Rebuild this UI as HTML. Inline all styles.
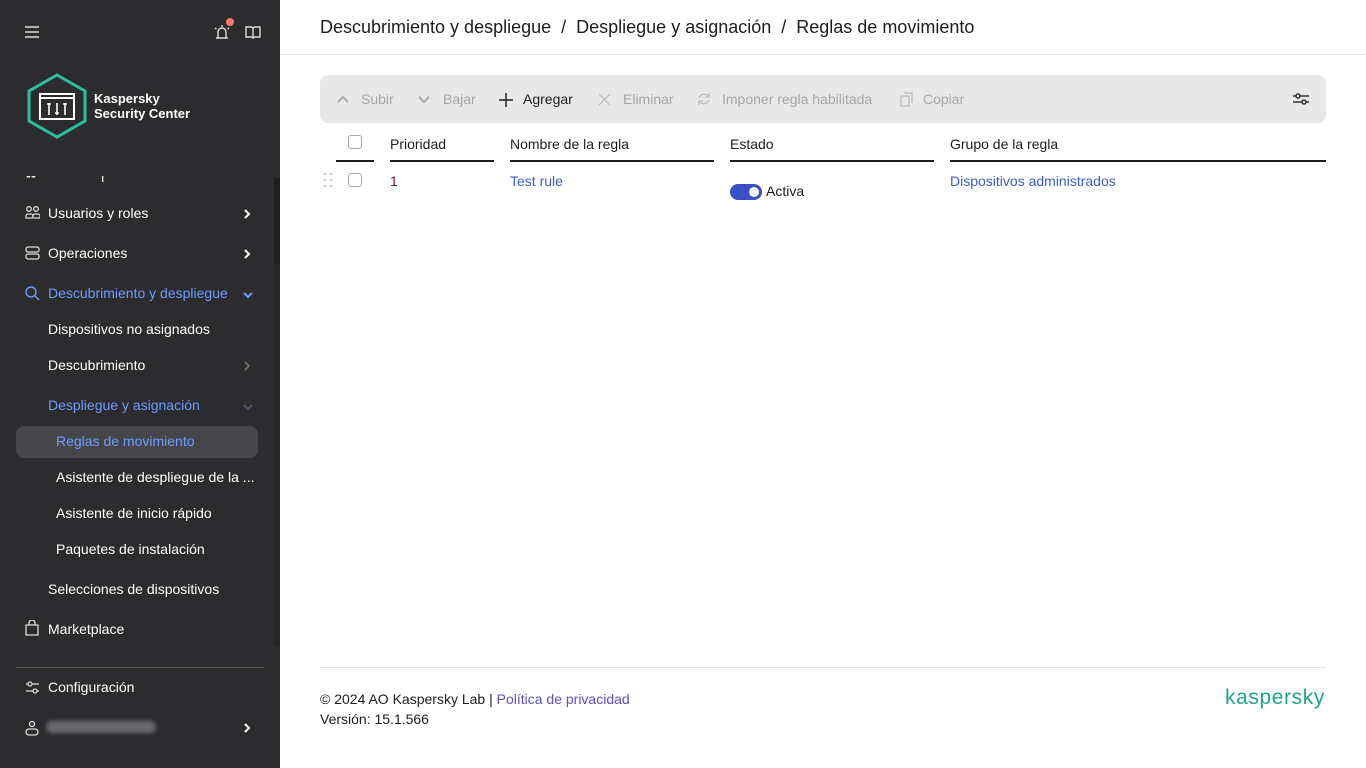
<!DOCTYPE html>
<html><head><meta charset="utf-8"><style>
*{box-sizing:border-box;margin:0;padding:0}
body{width:1366px;height:768px;overflow:hidden;font-family:"Liberation Sans",sans-serif;background:#fff;position:relative;color:#1d1d1b}
.sb{position:absolute;left:0;top:0;width:280px;height:768px;background:#2c2c2f;color:#fff}
.sb .t{position:absolute;font-size:14px;white-space:nowrap}
.blue{color:#6f9bff}
.chev{position:absolute;left:243px}
.main{position:absolute;left:280px;top:0;right:0;bottom:0}
.hdr{height:55px;border-bottom:1px solid #e4e4e4;padding:17px 0 0 40px;font-size:18px;color:#1d1d1b}
.tb{position:absolute;left:40px;top:75px;width:1006px;height:48px;background:#e8e8e8;border-radius:8px;font-size:14px;color:#a5a5a5}
.tb span{position:absolute;top:16px;white-space:nowrap}
.tb svg{position:absolute}
.th{position:absolute;top:136px;font-size:14px;height:26px;border-bottom:2px solid #1d1d1b}
.cb{position:absolute;width:14px;height:14px;border:1px solid #aaa;border-radius:3px;background:#fff}
a{color:#3d5ccb;text-decoration:none}
</style></head><body>
<div class="sb">
 <svg style="position:absolute;left:25px;top:25px" width="14" height="14"><path d="M0 2h14M0 7h14M0 12h14" stroke="#ddd" stroke-width="1.6"/></svg>
 <svg style="position:absolute;left:212px;top:22px" width="20" height="20"><path d="M4 16h12M6 16v-6a4 4 0 0 1 8 0v6M10 3v2M3 6l1.5 1M17 6l-1.5 1" stroke="#ddd" stroke-width="1.4" fill="none"/></svg>
 <div style="position:absolute;left:226px;top:18px;width:8px;height:8px;border-radius:50%;background:#f47b6f"></div>
 <svg style="position:absolute;left:245px;top:25px" width="16" height="14"><path d="M1 2h5a2 2 0 0 1 2 2v9a2 2 0 0 0-2-1H1zM15 2h-5a2 2 0 0 0-2 2v9a2 2 0 0 1 2-1h5z" stroke="#ddd" stroke-width="1.4" fill="none"/></svg>
 <svg style="position:absolute;left:26px;top:73px" width="62" height="66"><polygon points="31,2 59,18 59,48 31,64 3,48 3,18" fill="none" stroke="#2bbf9d" stroke-width="3"/><rect x="14" y="21" width="34" height="25" fill="none" stroke="#fff" stroke-width="2"/><path d="M14 25h34" stroke="#fff" stroke-width="2"/><path d="M23 30v12M31 30v12M39 30v12M21 31h4M29 40h4M37 31h4" stroke="#fff" stroke-width="1.6"/></svg>
 <div class="t" style="left:94px;top:91px;font-weight:bold;font-size:13px;line-height:15px">Kaspersky<br>Security Center</div>
 <div style="position:absolute;left:0;top:176px;width:274px;height:6px;overflow:hidden"><div class="t" style="left:26px;top:-9px">▪▪ &nbsp;&nbsp;&nbsp;&nbsp;&nbsp;&nbsp;&nbsp;&nbsp;&nbsp;&nbsp;&nbsp;' &nbsp;&nbsp;&nbsp;| &nbsp;&nbsp;&nbsp;&nbsp;&nbsp;&nbsp;&nbsp;&nbsp;&nbsp;&nbsp;&nbsp;'</div></div>
 <div style="position:absolute;left:274px;top:178px;width:6px;height:468px;background:#26262a"></div>
 <div style="position:absolute;left:274px;top:178px;width:6px;height:86px;background:#1e1e22"></div>
 <svg style="position:absolute;left:25px;top:206px" width="15" height="14"><circle cx="4" cy="3" r="2.3" fill="none" stroke="#ddd" stroke-width="1.3"/><circle cx="11" cy="3" r="2.3" fill="none" stroke="#ddd" stroke-width="1.3"/><path d="M1 12v-2a2 2 0 0 1 2-2h3a2 2 0 0 1 2 2v2zM8 10a2 2 0 0 1 2-2h3a2 2 0 0 1 2 2v2h-6" fill="none" stroke="#ddd" stroke-width="1.3"/></svg>
 <div class="t" style="left:48px;top:205px">Usuarios y roles</div>
 <svg class="chev" style="top:209px" width="8" height="10"><path d="M2 1l4 4-4 4" stroke="#fff" stroke-width="2" fill="none"/></svg>
 <svg style="position:absolute;left:25px;top:246px" width="15" height="14"><rect x="1" y="1" width="13" height="5" rx="2" fill="none" stroke="#ddd" stroke-width="1.3"/><rect x="1" y="8" width="13" height="5" rx="2" fill="none" stroke="#ddd" stroke-width="1.3"/></svg>
 <div class="t" style="left:48px;top:245px">Operaciones</div>
 <svg class="chev" style="top:249px" width="8" height="10"><path d="M2 1l4 4-4 4" stroke="#fff" stroke-width="2" fill="none"/></svg>
 <svg style="position:absolute;left:25px;top:286px" width="15" height="15"><circle cx="6" cy="6" r="5" fill="none" stroke="#6f9bff" stroke-width="1.4"/><path d="M10 10l4 4" stroke="#6f9bff" stroke-width="1.4"/></svg>
 <div class="t blue" style="left:48px;top:285px">Descubrimiento y despliegue</div>
 <svg class="chev" style="top:291px" width="10" height="8"><path d="M1 2l4 4 4-4" stroke="#6f9bff" stroke-width="2" fill="none"/></svg>
 <div class="t" style="left:48px;top:321px">Dispositivos no asignados</div>
 <div class="t" style="left:48px;top:357px">Descubrimiento</div>
 <svg class="chev" style="top:361px" width="8" height="10"><path d="M2 1l4 4-4 4" stroke="#777" stroke-width="1.6" fill="none"/></svg>
 <div class="t blue" style="left:48px;top:397px">Despliegue y asignación</div>
 <svg class="chev" style="top:403px" width="10" height="8"><path d="M1 2l4 4 4-4" stroke="#555a70" stroke-width="1.6" fill="none"/></svg>
 <div style="position:absolute;left:16px;top:426px;width:242px;height:32px;background:#45454a;border-radius:8px"></div>
 <div class="t blue" style="left:56px;top:433px">Reglas de movimiento</div>
 <div class="t" style="left:56px;top:469px">Asistente de despliegue de la ...</div>
 <div class="t" style="left:56px;top:505px">Asistente de inicio rápido</div>
 <div class="t" style="left:56px;top:541px">Paquetes de instalación</div>
 <div class="t" style="left:48px;top:581px">Selecciones de dispositivos</div>
 <svg style="position:absolute;left:25px;top:620px" width="14" height="16"><path d="M1 5h12v10H1zM4 5V3a3 3 0 0 1 6 0v2" fill="none" stroke="#ddd" stroke-width="1.3"/></svg>
 <div class="t" style="left:48px;top:621px">Marketplace</div>
 <div style="position:absolute;left:16px;top:667px;width:248px;height:1px;background:#555"></div>
 <svg style="position:absolute;left:25px;top:680px" width="15" height="15"><path d="M1 4h13M1 11h13" stroke="#ddd" stroke-width="1.3"/><circle cx="5" cy="4" r="2" fill="#2c2c2f" stroke="#ddd" stroke-width="1.3"/><circle cx="10" cy="11" r="2" fill="#2c2c2f" stroke="#ddd" stroke-width="1.3"/></svg>
 <div class="t" style="left:48px;top:679px">Configuración</div>
 <svg style="position:absolute;left:25px;top:720px" width="14" height="16"><circle cx="7" cy="4" r="2.5" fill="none" stroke="#ddd" stroke-width="1.3"/><rect x="1" y="9" width="12" height="6" rx="3" fill="none" stroke="#ddd" stroke-width="1.3"/></svg>
 <div style="position:absolute;left:46px;top:721px;width:110px;height:12px;background:#6a6a6e;border-radius:6px;filter:blur(2px)"></div>
 <svg class="chev" style="top:723px" width="8" height="10"><path d="M2 1l4 4-4 4" stroke="#fff" stroke-width="2" fill="none"/></svg>
</div>
<div class="main">
 <div class="hdr">Descubrimiento y despliegue &nbsp;/&nbsp; Despliegue y asignación &nbsp;/&nbsp; Reglas de movimiento</div>
 <div class="tb">
  <svg style="left:17px;top:20px" width="12" height="8"><path d="M1 7l5-5 5 5" stroke="#aaa" stroke-width="2" fill="none"/></svg>
  <span style="left:41px">Subir</span>
  <svg style="left:98px;top:21px" width="12" height="8"><path d="M1 1l5 5 5-5" stroke="#aaa" stroke-width="2" fill="none"/></svg>
  <span style="left:123px">Bajar</span>
  <svg style="left:179px;top:18px" width="14" height="14"><path d="M7 0v14M0 7h14" stroke="#1d1d1b" stroke-width="1.4"/></svg>
  <span style="left:203px;color:#1d1d1b">Agregar</span>
  <svg style="left:279px;top:19px" width="11" height="11"><path d="M0 0l11 11M11 0L0 11" stroke="#bbb" stroke-width="1.2"/></svg>
  <span style="left:303px">Eliminar</span>
  <svg style="left:377px;top:17px" width="14" height="14"><path d="M12 5a5.5 5.5 0 0 0-10 1M2 9a5.5 5.5 0 0 0 10-1M12 1v4h-4M2 13v-4h4" stroke="#bbb" stroke-width="1.2" fill="none"/></svg>
  <span style="left:402px">Imponer regla habilitada</span>
  <svg style="left:580px;top:17px" width="13" height="15"><path d="M4 1h8v10M1 4h8v10H1z" stroke="#bbb" stroke-width="1.2" fill="none"/></svg>
  <span style="left:603px">Copiar</span>
  <svg style="left:972px;top:17px" width="18" height="14"><path d="M1 4h16M1 10h16" stroke="#333" stroke-width="1.5"/><circle cx="6" cy="4" r="2" fill="#e8e8e8" stroke="#333" stroke-width="1.5"/><circle cx="12" cy="10" r="2" fill="#e8e8e8" stroke="#333" stroke-width="1.5"/></svg>
 </div>
 <div class="th" style="left:56px;width:38px"></div>
 <div class="cb" style="left:68px;top:135px"></div>
 <div class="th" style="left:110px;width:104px">Prioridad</div>
 <div class="th" style="left:230px;width:204px">Nombre de la regla</div>
 <div class="th" style="left:450px;width:204px">Estado</div>
 <div class="th" style="left:670px;width:376px">Grupo de la regla</div>
 <svg style="position:absolute;left:43px;top:172px" width="10" height="16"><g fill="#c8c8c8"><circle cx="2" cy="2" r="1.3"/><circle cx="8" cy="2" r="1.3"/><circle cx="2" cy="8" r="1.3"/><circle cx="8" cy="8" r="1.3"/><circle cx="2" cy="14" r="1.3"/><circle cx="8" cy="14" r="1.3"/></g></svg>
 <div class="cb" style="left:68px;top:173px"></div>
 <div style="position:absolute;left:110px;top:173px;font-size:14px;color:#5a1d3a">1</div>
 <a style="position:absolute;left:230px;top:173px;font-size:14px">Test rule</a>
 <div style="position:absolute;left:450px;top:184px;width:32px;height:16px;border-radius:8px;background:#3d4fc4"><div style="position:absolute;right:3px;top:3px;width:10px;height:10px;border-radius:50%;background:#fff"></div></div>
 <div style="position:absolute;left:486px;top:183px;font-size:14px">Activa</div>
 <a style="position:absolute;left:670px;top:173px;font-size:14px">Dispositivos administrados</a>
 <div style="position:absolute;left:40px;top:667px;width:1006px;height:1px;background:#e4e4e4"></div>
 <div style="position:absolute;left:40px;top:689px;font-size:14px;line-height:20px">© 2024 AO Kaspersky Lab | <a style="color:#5b4fc4">Política de privacidad</a><br>Versión: 15.1.566</div>
 <div style="position:absolute;left:945px;top:686px;font-size:21px;color:#1fa58a;letter-spacing:0.6px">kaspersky</div>
</div>
</body></html>
